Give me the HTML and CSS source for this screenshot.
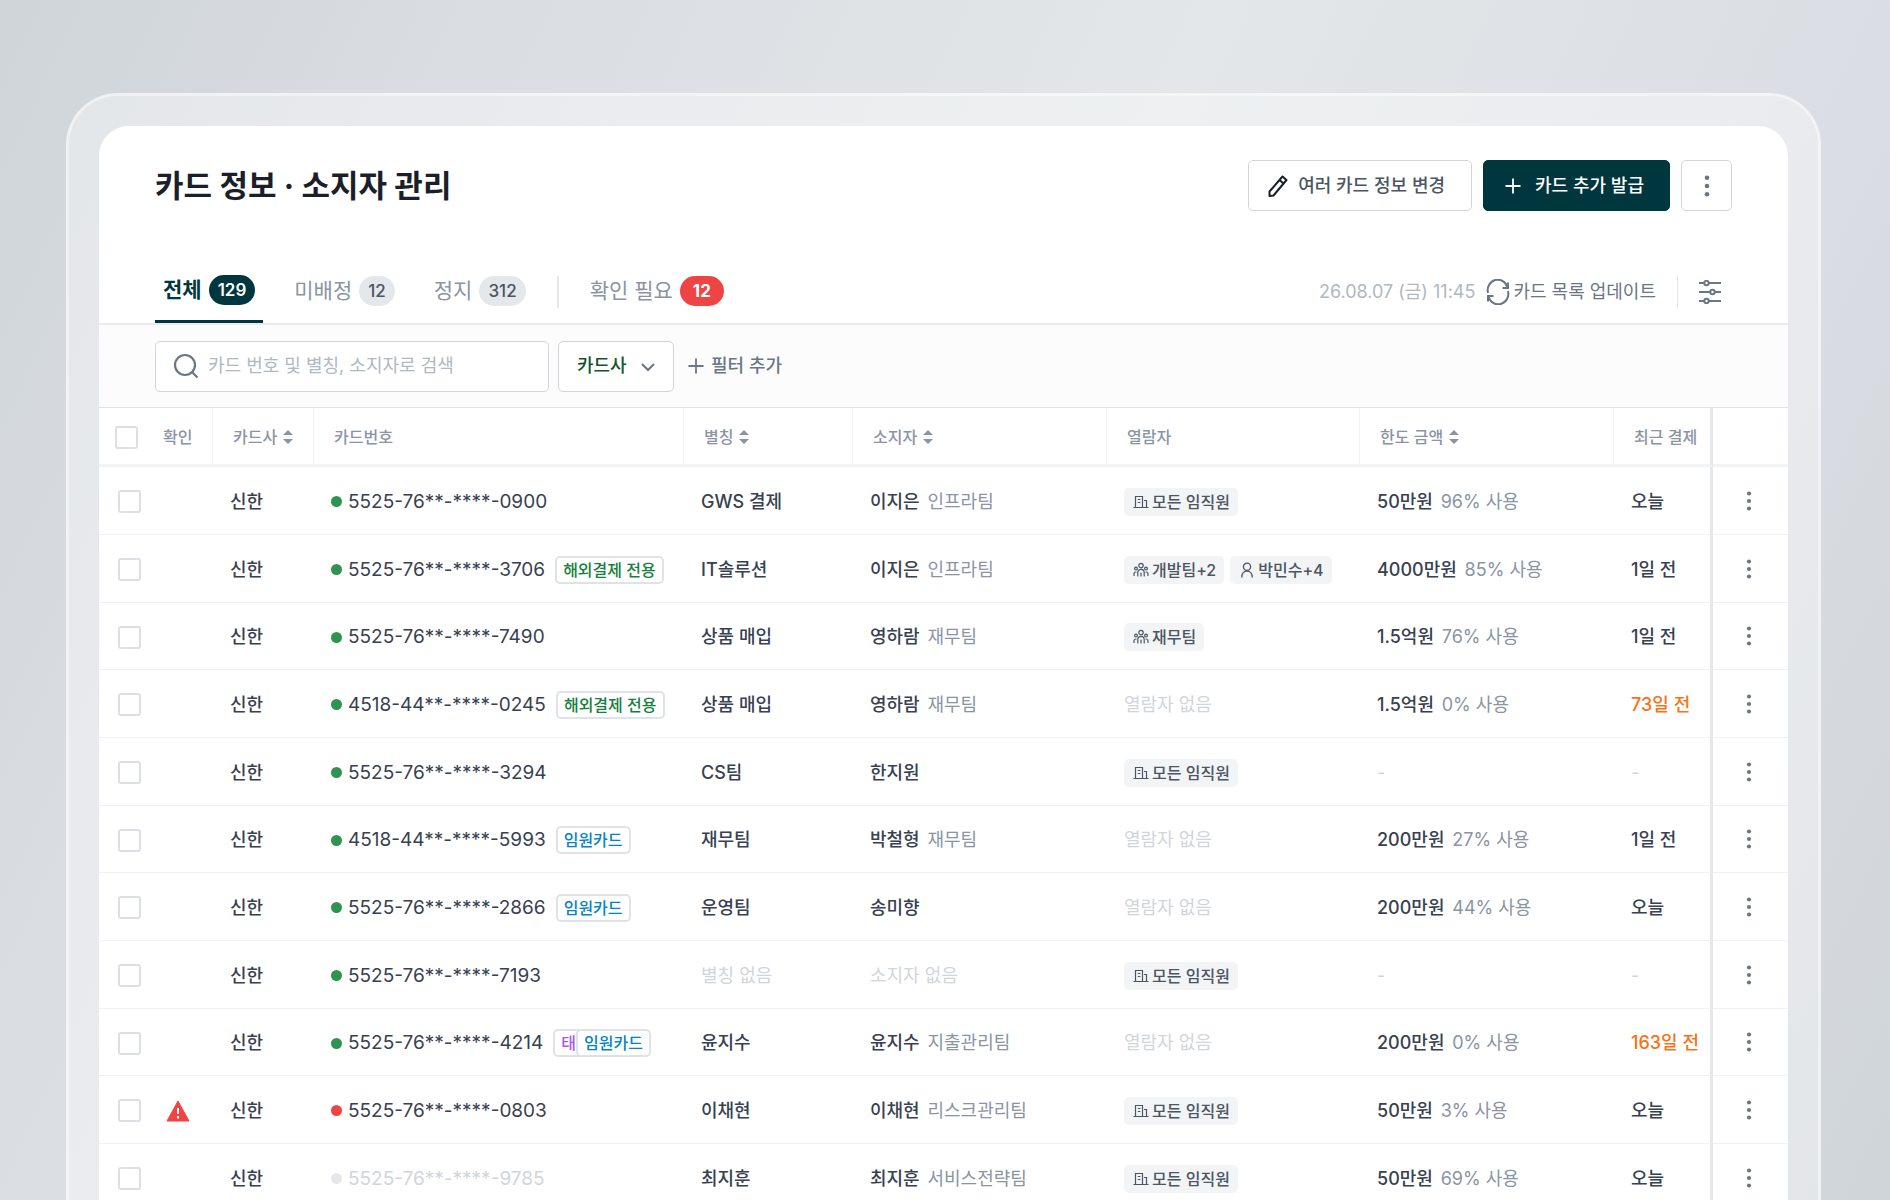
FILE: index.html
```html
<!DOCTYPE html>
<html lang="ko">
<head>
	<meta charset="UTF-8">
	<title>카드 정보 · 소지자 관리</title>
	<link rel="stylesheet" href="styles.css">
</head>
<body>
	<!-- 아이콘 -->
	<svg class="sprite" aria-hidden="true">
		<symbol id="i-more" viewBox="0 0 24 24"><g fill="currentColor"><circle cx="12" cy="3" r="2.5"/><circle cx="12" cy="12" r="2.5"/><circle cx="12" cy="21" r="2.5"/></g></symbol>
		<symbol id="i-building" viewBox="0 0 16 16"><path d="M.5 13.5h15M2.5 13.5v-11h7v11M4.8 5.5h2.6M4.8 8.5h2.6M11 6.5h2.500v7" fill="none" stroke="currentColor" stroke-width="1.2"/></symbol>
		<symbol id="i-team" viewBox="0 0 16 16"><g fill="none" stroke="currentColor" stroke-width="1.2" stroke-linecap="round"><circle cx="8" cy="3.600" r="2.200"/><circle cx="3" cy="6.600" r="1.400"/><circle cx="13" cy="6.600" r="1.400"/><path d="M4.800 14v-3.500a3.200 3.200 0 0 1 6.400 0V14M1 13.500v-1.500a2 2 0 0 1 2-2M15 13.500v-1.500a2 2 0 0 0-2-2M8 11v3"/></g></symbol>
		<symbol id="i-user" viewBox="0 0 16 16"><g fill="none" stroke="currentColor" stroke-width="1.300" stroke-linecap="round"><circle cx="8" cy="4.800" r="3.600"/><path d="M2.800 15c0-3.300 1.700-5.800 5.200-5.800s5.200 2.500 5.200 5.800"/></g></symbol>
		<symbol id="i-sort" viewBox="0 0 12 16"><path d="M6 1l5 5H1zM6 15l5-5H1z" fill="currentColor"/></symbol>
		<symbol id="i-plus" viewBox="0 0 16 16"><path d="M8 .5v15M.5 8h15" fill="none" stroke="currentColor" stroke-width="1.800"/></symbol>
	</svg>

	<div class="frame">
	<main class="panel">
		<header class="top">
			<h1>카드 정보 · 소지자 관리</h1>
			<div class="actions">
				<button class="btn edit">
					<svg width="20" height="24" viewBox="0 0 20 24" fill="none" stroke="#1b1f2a" stroke-width="2" stroke-linejoin="round"><path d="M1.500 22v-4.500L14.500 2.500l4 3.500L5.500 21.500zM11.500 6l4 3.500"/></svg>
					여러 카드 정보 변경
				</button>
				<button class="btn primary"><svg width="16" height="16"><use href="#i-plus"/></svg>카드 추가 발급</button>
				<button class="btn square" aria-label="더보기"><svg width="22" height="22"><use href="#i-more"/></svg></button>
			</div>
		</header>

		<!-- 탭 -->
		<nav class="tabs">
			<a href="#" class="tab on">전체<b>129</b></a>
			<a href="#" class="tab">미배정<b>12</b></a>
			<a href="#" class="tab">정지<b>312</b></a>
			<i class="line"></i>
			<a href="#" class="tab alert">확인 필요<b>12</b></a>
			<div class="sync">
				<time>26.08.07 (금) 11:45</time>
				<button class="plain">
					<svg width="24" height="26" viewBox="0 0 24 26" fill="none" stroke="currentColor" stroke-width="2"><path d="M2 14A10 10.500 0 0 1 21.500 8.500M22 12A10 10.500 0 0 1 2.500 17.500M22 3.500v5.500h-5.500M2 22.500V17h5.500"/></svg>
					카드 목록 업데이트
				</button>
				<i class="line"></i>
				<button class="plain" aria-label="보기 설정">
					<svg width="22" height="24" viewBox="0 0 22 24" fill="none" stroke="currentColor" stroke-width="2"><path d="M0 3h5M10 3h12M0 12h11M16 12h6M0 21h5M10 21h12"/><circle cx="7.500" cy="3" r="2.200"/><circle cx="13.500" cy="12" r="2.200"/><circle cx="7.500" cy="21" r="2.200"/></svg>
				</button>
			</div>
		</nav>

		<!-- 필터 -->
		<div class="filter">
			<label class="search">
				<svg width="26" height="26" viewBox="0 0 26 26" fill="none" stroke="currentColor" stroke-width="2.200"><circle cx="12" cy="12" r="10"/><path d="M19 19l5.500 5.500"/></svg>
				<input type="text" placeholder="카드 번호 및 별칭, 소지자로 검색" aria-label="카드 검색">
			</label>
			<div class="select">
				<select aria-label="카드사"><option>카드사</option><option>신한</option></select>
				<svg width="14" height="9" viewBox="0 0 14 9" fill="none" stroke="currentColor" stroke-width="2"><path d="M1 1l6 6 6-6"/></svg>
			</div>
			<button class="plain add"><svg width="16" height="16"><use href="#i-plus"/></svg>필터 추가</button>
		</div>

		<table>
			<colgroup>
				<col class="c-check"><col class="c-warn"><col class="c-brand"><col class="c-num"><col class="c-nick"><col class="c-owner"><col class="c-view"><col class="c-limit"><col class="c-last"><col class="c-more">
			</colgroup>
			<thead>
				<tr>
					<th class="check"><input type="checkbox" aria-label="전체 선택"></th>
					<th class="warn">확인</th>
					<th>카드사<svg class="sort"><use href="#i-sort"/></svg></th>
					<th>카드번호</th>
					<th>별칭<svg class="sort"><use href="#i-sort"/></svg></th>
					<th>소지자<svg class="sort"><use href="#i-sort"/></svg></th>
					<th>열람자</th>
					<th>한도 금액<svg class="sort"><use href="#i-sort"/></svg></th>
					<th>최근 결제</th>
					<th class="more"></th>
				</tr>
			</thead>
			<tbody>
				<tr>
					<td class="check"><input type="checkbox" aria-label="선택"></td>
					<td class="warn"></td>
					<td>신한</td>
					<td><div class="num"><i class="dot"></i>5525-76**-****-0900</div></td>
					<td>GWS 결제</td>
					<td>이지은 <span class="sub">인프라팀</span></td>
					<td><div class="chips"><span class="chip"><svg><use href="#i-building"/></svg>모든 임직원</span></div></td>
					<td>50만원 <span class="sub">96% 사용</span></td>
					<td>오늘</td>
					<td class="more"><button aria-label="더보기"><svg><use href="#i-more"/></svg></button></td>
				</tr>
				<tr>
					<td class="check"><input type="checkbox" aria-label="선택"></td>
					<td class="warn"></td>
					<td>신한</td>
					<td><div class="num"><i class="dot"></i>5525-76**-****-3706<span class="tag green">해외결제 전용</span></div></td>
					<td>IT솔루션</td>
					<td>이지은 <span class="sub">인프라팀</span></td>
					<td><div class="chips"><span class="chip"><svg><use href="#i-team"/></svg>개발팀+2</span><span class="chip"><svg><use href="#i-user"/></svg>박민수+4</span></div></td>
					<td>4000만원 <span class="sub">85% 사용</span></td>
					<td>1일 전</td>
					<td class="more"><button aria-label="더보기"><svg><use href="#i-more"/></svg></button></td>
				</tr>
				<tr>
					<td class="check"><input type="checkbox" aria-label="선택"></td>
					<td class="warn"></td>
					<td>신한</td>
					<td><div class="num"><i class="dot"></i>5525-76**-****-7490</div></td>
					<td>상품 매입</td>
					<td>영하람 <span class="sub">재무팀</span></td>
					<td><div class="chips"><span class="chip"><svg><use href="#i-team"/></svg>재무팀</span></div></td>
					<td>1.5억원 <span class="sub">76% 사용</span></td>
					<td>1일 전</td>
					<td class="more"><button aria-label="더보기"><svg><use href="#i-more"/></svg></button></td>
				</tr>
				<tr>
					<td class="check"><input type="checkbox" aria-label="선택"></td>
					<td class="warn"></td>
					<td>신한</td>
					<td><div class="num"><i class="dot"></i>4518-44**-****-0245<span class="tag green">해외결제 전용</span></div></td>
					<td>상품 매입</td>
					<td>영하람 <span class="sub">재무팀</span></td>
					<td class="none">열람자 없음</td>
					<td>1.5억원 <span class="sub">0% 사용</span></td>
					<td class="late">73일 전</td>
					<td class="more"><button aria-label="더보기"><svg><use href="#i-more"/></svg></button></td>
				</tr>
				<tr>
					<td class="check"><input type="checkbox" aria-label="선택"></td>
					<td class="warn"></td>
					<td>신한</td>
					<td><div class="num"><i class="dot"></i>5525-76**-****-3294</div></td>
					<td>CS팀</td>
					<td>한지원</td>
					<td><div class="chips"><span class="chip"><svg><use href="#i-building"/></svg>모든 임직원</span></div></td>
					<td class="none">-</td>
					<td class="none">-</td>
					<td class="more"><button aria-label="더보기"><svg><use href="#i-more"/></svg></button></td>
				</tr>
				<tr>
					<td class="check"><input type="checkbox" aria-label="선택"></td>
					<td class="warn"></td>
					<td>신한</td>
					<td><div class="num"><i class="dot"></i>4518-44**-****-5993<span class="tag blue">임원카드</span></div></td>
					<td>재무팀</td>
					<td>박철형 <span class="sub">재무팀</span></td>
					<td class="none">열람자 없음</td>
					<td>200만원 <span class="sub">27% 사용</span></td>
					<td>1일 전</td>
					<td class="more"><button aria-label="더보기"><svg><use href="#i-more"/></svg></button></td>
				</tr>
				<tr>
					<td class="check"><input type="checkbox" aria-label="선택"></td>
					<td class="warn"></td>
					<td>신한</td>
					<td><div class="num"><i class="dot"></i>5525-76**-****-2866<span class="tag blue">임원카드</span></div></td>
					<td>운영팀</td>
					<td>송미향</td>
					<td class="none">열람자 없음</td>
					<td>200만원 <span class="sub">44% 사용</span></td>
					<td>오늘</td>
					<td class="more"><button aria-label="더보기"><svg><use href="#i-more"/></svg></button></td>
				</tr>
				<tr>
					<td class="check"><input type="checkbox" aria-label="선택"></td>
					<td class="warn"></td>
					<td>신한</td>
					<td><div class="num"><i class="dot"></i>5525-76**-****-7193</div></td>
					<td class="none">별칭 없음</td>
					<td class="none">소지자 없음</td>
					<td><div class="chips"><span class="chip"><svg><use href="#i-building"/></svg>모든 임직원</span></div></td>
					<td class="none">-</td>
					<td class="none">-</td>
					<td class="more"><button aria-label="더보기"><svg><use href="#i-more"/></svg></button></td>
				</tr>
				<tr>
					<td class="check"><input type="checkbox" aria-label="선택"></td>
					<td class="warn"></td>
					<td>신한</td>
					<td><div class="num"><i class="dot"></i>5525-76**-****-4214<span class="tag purple">태</span><span class="tag blue over">임원카드</span></div></td>
					<td>윤지수</td>
					<td>윤지수 <span class="sub">지출관리팀</span></td>
					<td class="none">열람자 없음</td>
					<td>200만원 <span class="sub">0% 사용</span></td>
					<td class="late">163일 전</td>
					<td class="more"><button aria-label="더보기"><svg><use href="#i-more"/></svg></button></td>
				</tr>
				<tr>
					<td class="check"><input type="checkbox" aria-label="선택"></td>
					<td class="warn"><svg width="24" height="22" viewBox="0 0 24 22"><path d="M12 1l11 20H1z" fill="#ef4444" stroke="#ef4444" stroke-linejoin="round"/><path d="M12 8v6M12 16v2.500" stroke="#fff" stroke-width="2"/></svg></td>
					<td>신한</td>
					<td><div class="num"><i class="dot red"></i>5525-76**-****-0803</div></td>
					<td>이채현</td>
					<td>이채현 <span class="sub">리스크관리팀</span></td>
					<td><div class="chips"><span class="chip"><svg><use href="#i-building"/></svg>모든 임직원</span></div></td>
					<td>50만원 <span class="sub">3% 사용</span></td>
					<td>오늘</td>
					<td class="more"><button aria-label="더보기"><svg><use href="#i-more"/></svg></button></td>
				</tr>
				<tr>
					<td class="check"><input type="checkbox" aria-label="선택"></td>
					<td class="warn"></td>
					<td>신한</td>
					<td class="none"><div class="num"><i class="dot off"></i>5525-76**-****-9785</div></td>
					<td>최지훈</td>
					<td>최지훈 <span class="sub">서비스전략팀</span></td>
					<td><div class="chips"><span class="chip"><svg><use href="#i-building"/></svg>모든 임직원</span></div></td>
					<td>50만원 <span class="sub">69% 사용</span></td>
					<td>오늘</td>
					<td class="more"><button aria-label="더보기"><svg><use href="#i-more"/></svg></button></td>
				</tr>
			</tbody>
		</table>
	</main>
	</div>
</body>
</html>
```

FILE: styles.css
```css
* {
	box-sizing: border-box;
}
body {
	margin: 0;
	height: 100vh;
	overflow: hidden;
	padding: 93px 69px 0 66px;
	font-family: Inter, "Noto Sans CJK KR", sans-serif;
	font-size: 18px;
	font-weight: 500;
	line-height: 26px;
	color: #374151;
	background: linear-gradient(115deg, #cfd5d9 0%, #d9dce1 18%, #e3e7e9 50%, #dadde3 78%, #d0d5d9 100%);
}
button, input, select {
	font: inherit;
	color: inherit;
}
button {
	cursor: pointer;
}
svg {
	flex: none;
}
.sprite {
	position: absolute;
	width: 0;
	height: 0;
}

/*외곽 프레임*/
.frame {
	padding: 30px 30px 0;
	border: 3px solid rgba(255,255,255,.65);
	border-bottom: 0;
	border-radius: 52px 52px 0 0;
	background: rgba(255,255,255,.4);
	background-clip: padding-box;
}
.panel {
	overflow: hidden;
	border-radius: 30px 30px 0 0;
	background: #fff;
}

/*상단*/
.top {
	display: flex;
	align-items: center;
	justify-content: space-between;
	padding: 34px 56px 0;
}
h1 {
	margin: 0;
	font-size: 31px;
	line-height: 50px;
	font-weight: 700;
	color: #1b1f2a;
}
.actions {
	display: flex;
	gap: 11px;
}
.btn {
	display: flex;
	align-items: center;
	gap: 10px;
	height: 51px;
	padding: 0 26px 0 19px;
	border: 1px solid #d1d5db;
	border-radius: 5px;
	color: #4b5563;
	background: #fff;
}
.primary {
	gap: 14px;
	padding: 0 25px 0 21px;
	border-color: #00363d;
	color: #fff;
	background: #00363d;
}
.square {
	justify-content: center;
	width: 51px;
	padding: 0;
	color: #6b7684;
}

/*탭*/
.tabs {
	display: flex;
	align-items: stretch;
	margin-top: 49px;
	padding: 0 67px 0 56px;
	height: 65px;
	border-bottom: 2px solid #e9ebed;
}
.tab {
	display: flex;
	align-items: center;
	gap: 7px;
	margin-right: 23px;
	padding: 0 8px 2px;
	font-size: 21px;
	font-weight: 400;
	color: #8a94a3;
	text-decoration: none;
}
.tab b {
	padding: 0 9px;
	border-radius: 15px;
	font-size: 17px;
	line-height: 30px;
	font-weight: 500;
	color: #4b5563;
	background: #e5e8eb;
}
.on {
	padding-bottom: 0;
	border-bottom: 3px solid #00363d;
	font-weight: 700;
	color: #00363d;
}
.on b {
	font-weight: 600;
	color: #fff;
	background: #00363d;
}
.alert b {
	padding: 0 13px;
	font-weight: 700;
	color: #fff;
	background: #ef4444;
}
.line {
	align-self: center;
	width: 2px;
	height: 32px;
	margin-right: 23px;
	background: #e5e7eb;
}
.sync {
	display: flex;
	align-items: center;
	margin-left: auto;
	font-weight: 400;
}
.sync time {
	margin-right: 11px;
	color: #b0b8c1;
}
.sync .line {
	width: 1px;
	margin: 0 21px;
}
.plain {
	display: flex;
	align-items: center;
	gap: 3px;
	padding: 0;
	border: 0;
	color: #6b7684;
	background: none;
}

/*필터*/
.filter {
	display: flex;
	align-items: center;
	gap: 9px;
	height: 83px;
	padding: 0 56px;
	border-bottom: 1px solid #e0e3e6;
	background: #fcfcfc;
}
.search {
	display: flex;
	align-items: center;
	gap: 9px;
	width: 394px;
	height: 51px;
	padding: 0 17px;
	border: 1px solid #d1d5db;
	border-radius: 5px;
	color: #6b7684;
	background: #fff;
}
.search input {
	flex: 1;
	min-width: 0;
	padding: 0;
	border: 0;
	outline: none;
	font-weight: 400;
	background: none;
}
.search input::placeholder {
	color: #b0b8c1;
}
.select {
	position: relative;
	color: #6b7684;
}
.select select {
	appearance: none;
	width: 116px;
	height: 51px;
	padding: 0 18px;
	border: 1px solid #d1d5db;
	border-radius: 5px;
	color: #14532d;
	background: #fff;
}
.select svg {
	position: absolute;
	right: 19px;
	top: 22px;
	pointer-events: none;
}
.add {
	gap: 7px;
	margin-left: 5px;
}

/*표*/
table {
	width: 100%;
	table-layout: fixed;
	border-collapse: separate;
	border-spacing: 0;
	white-space: nowrap;
}
.c-check { width: 50px; }
.c-warn { width: 64px; }
.c-brand { width: 101px; }
.c-num { width: 370px; }
.c-nick { width: 169px; }
.c-owner { width: 254px; }
.c-view { width: 253px; }
.c-limit { width: 254px; }
.c-last { width: 99px; }
.c-more { width: 75px; }
th {
	height: 59px;
	padding: 2px 0 0 20px;
	border-right: 1px solid #f1f3f4;
	border-bottom: 3px solid #f1f3f5;
	font-size: 16px;
	font-weight: 500;
	text-align: left;
	color: #8a94a3;
}
th.check {
	padding-left: 16px;
	border-right: 0;
}
th.warn {
	padding-left: 14px;
}
th:nth-last-child(2),
td:nth-last-child(2) {
	border-right: 3px solid #e5e8eb;
}
th.more {
	border-right: 0;
}
.sort {
	width: 12px;
	height: 16px;
	margin-left: 5px;
	vertical-align: -2px;
}
td {
	height: 68px;
	padding: 2px 0 0 17px;
	border-bottom: 1px solid #eff2f3;
}
tr:nth-child(3n) td {
	height: 67px;
}
td.check {
	padding-left: 19px;
}
td.warn svg {
	display: block;
}
input[type="checkbox"] {
	appearance: none;
	display: block;
	width: 23px;
	height: 23px;
	margin: 0;
	border: 2px solid #dcdfe4;
	border-radius: 3px;
	background: #fff;
}
.num {
	display: flex;
	align-items: center;
	font-size: 19px;
	font-weight: 400;
}
.dot {
	width: 11px;
	height: 11px;
	margin-right: 6px;
	border-radius: 50%;
	background: #2f9450;
}
.red {
	background: #ef4444;
}
.off {
	background: #e5e7eb;
}
.tag {
	margin-left: 10px;
	padding: 0 6px;
	border: 2px solid #dfe2e6;
	border-radius: 5px;
	font-size: 16px;
	font-weight: 500;
	line-height: 24px;
	background: #fff;
}
.green {
	color: #15803d;
}
.blue {
	color: #0284c7;
}
.purple {
	color: #a855f7;
}
.over {
	margin-left: -8px;
}
.sub {
	margin-left: 3px;
	font-weight: 400;
	color: #8a94a3;
}
.none {
	font-weight: 400;
	color: #d1d5db;
}
.late {
	color: #f97316;
}
.chips {
	display: flex;
	gap: 6px;
}
.chip {
	display: flex;
	align-items: center;
	gap: 3px;
	padding: 0 8px 0 9px;
	border-radius: 5px;
	font-size: 16px;
	line-height: 28px;
	color: #4b5563;
	background: #f2f4f6;
}
.chip svg {
	width: 16px;
	height: 16px;
}
td.more {
	padding: 0 4px 0 0;
}
.more button {
	display: block;
	margin: 0 auto;
	padding: 0;
	border: 0;
	color: #6b7684;
	background: none;
}
.more svg {
	display: block;
	width: 20px;
	height: 20px;
}
```
